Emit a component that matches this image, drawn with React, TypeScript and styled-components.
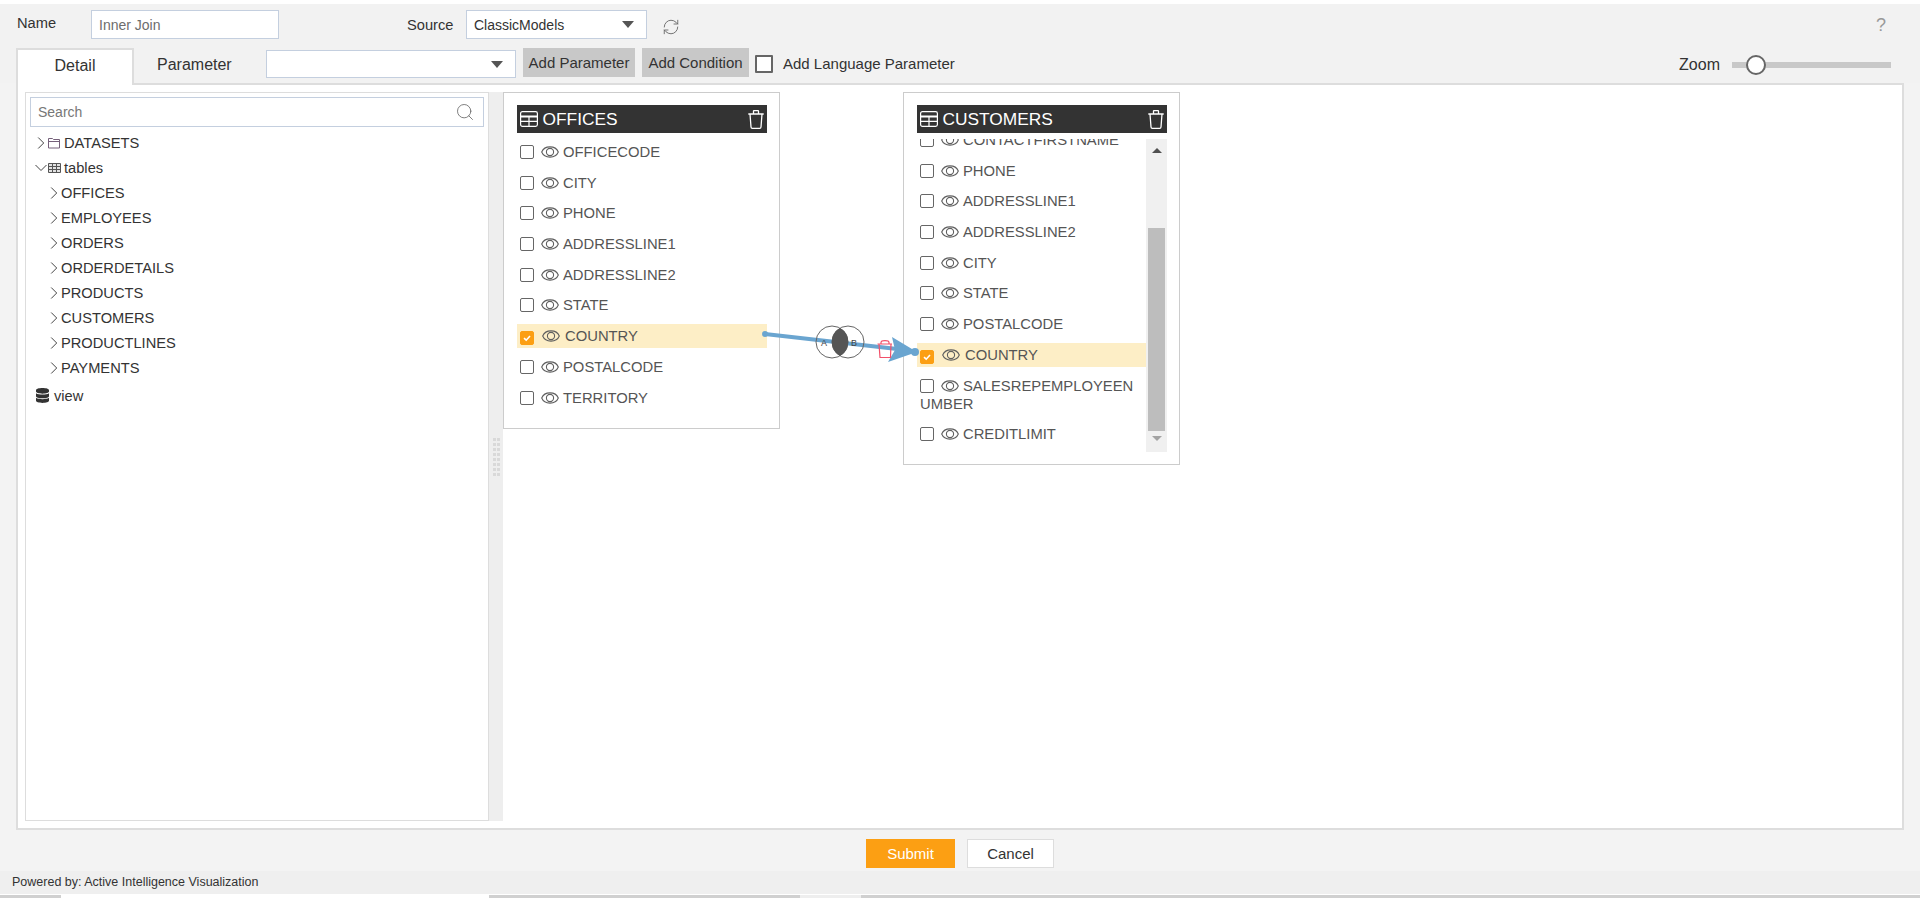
import React from 'react';
import styled, { createGlobalStyle } from 'styled-components';
import { FaDatabase } from 'react-icons/fa';
import { RefreshCw, Search } from 'lucide-react';

const Global = createGlobalStyle`
  html, body { margin: 0; padding: 0; background: #f2f2f2; }
  * { box-sizing: border-box; }
  body { font-family: "Liberation Sans", Arial, sans-serif; font-size: 14.67px; color: #333; }
`;

const Page = styled.div`
  width: 1920px;
  height: 898px;
  overflow: hidden;
  display: flex;
  flex-direction: column;
  background: #f3f3f3;
  border-top: 4px solid #fff;
`;

const HeaderRow = styled.div`
  height: 44px;
  flex: none;
  display: flex;
  align-items: flex-start;
  padding: 6px 33px 0 17px;
  background: #f2f2f2;
`;

const FieldLabel = styled.label<{ $width: number; $top?: number }>`
  width: ${p => p.$width}px;
  flex: none;
  margin-top: ${p => p.$top ?? 0}px;
  line-height: 26px;
  color: #333;
`;

const NameInput = styled.input`
  width: 188px;
  height: 29px;
  border: 1px solid #c4cfdf;
  padding: 2px 7px;
  font: 14px "Liberation Sans", Arial, sans-serif;
  color: #6d6d6d;
  background: #fff;
  outline: none;
  margin-right: 128px;
`;

const Select = styled.div<{ $width: number; $height: number }>`
  width: ${p => p.$width}px;
  height: ${p => p.$height}px;
  flex: none;
  display: flex;
  align-items: center;
  padding: 0 12px 0 7px;
  background: #fff;
  border: 1px solid #c4cfdf;
  color: #333;
  font-size: 14px;
  &::after {
    content: '';
    margin-left: auto;
    border-left: 6px solid transparent;
    border-right: 6px solid transparent;
    border-top: 7px solid #555;
  }
`;

const ReloadIcon = styled(RefreshCw)`
  width: 18px;
  height: 18px;
  margin: 8px 0 0 15px;
  color: #666;
`;

const HelpMark = styled.span`
  margin-left: auto;
  margin-right: 1px;
  margin-top: 5px;
  font-size: 18px;
  color: #999;
`;

const TabRow = styled.div`
  height: 35px;
  flex: none;
  display: flex;
  align-items: flex-start;
  padding: 0 0 0 16px;
  position: relative;
  z-index: 1;
  background: #f2f2f2;
`;

const ActiveTab = styled.div`
  width: 118px;
  height: 37px;
  flex: none;
  background: #fff;
  border: 2px solid #ddd;
  border-bottom: none;
  text-align: center;
  line-height: 32px;
  font-size: 16px;
  color: #333;
`;

const Tab = styled.div`
  width: 132px;
  flex: none;
  padding-left: 23px;
  line-height: 33px;
  font-size: 16px;
  color: #333;
`;

const RowSelectSlot = styled.div`
  margin: 2px 7px 0 0;
`;

const GrayButton = styled.button<{ $width: number }>`
  width: ${p => p.$width}px;
  height: 29px;
  flex: none;
  border: none;
  background: #c8c8c8;
  color: #333;
  font: 15px "Liberation Sans", Arial, sans-serif;
  padding: 0;
  margin-right: 7px;
`;

const LanguageBox = styled.span`
  width: 18px;
  height: 18px;
  flex: none;
  margin: 7px 10px 0 -1px;
  border: 2px solid #666;
  border-radius: 1px;
  background: #fff;
`;

const LanguageLabel = styled.span`
  line-height: 31px;
  font-size: 15px;
  color: #333;
`;

const ZoomGroup = styled.div`
  margin-left: auto;
  margin-right: 29px;
  display: flex;
  align-items: center;
  height: 34px;
`;

const ZoomLabel = styled.span`
  margin-right: 12px;
  font-size: 16px;
  color: #333;
`;

const SliderTrack = styled.div`
  width: 159px;
  height: 6px;
  background: #c8c8c8;
  position: relative;
`;

const SliderThumb = styled.span`
  position: absolute;
  left: 14px;
  top: -7px;
  width: 20px;
  height: 20px;
  border-radius: 50%;
  background: #fff;
  border: 2px solid #666;
`;

const MainPanel = styled.div`
  height: 747px;
  flex: none;
  margin: 0 16px;
  background: #fff;
  border: 2px solid #ddd;
  display: flex;
  padding: 7px 0 7px 7px;
`;

const Sidebar = styled.div`
  width: 464px;
  flex: none;
  border: 1px solid #ddd;
  padding: 4px;
`;

const SearchBox = styled.div`
  height: 30px;
  border: 1px solid #c4cfdf;
  display: flex;
  align-items: center;
  justify-content: space-between;
  padding: 0 8px 0 7px;
  color: #777;
  font-size: 14px;
  margin-bottom: 3px;
`;

const SearchIcon = styled(Search)`
  width: 20px;
  height: 20px;
  color: #666;
`;

const TreeRow = styled.div<{ $indent: number }>`
  height: 25px;
  display: flex;
  align-items: center;
  padding-left: ${p => p.$indent}px;
  color: #333;
  white-space: nowrap;
`;

const TreeIconSlot = styled.span<{ $gap: number }>`
  display: inline-flex;
  align-items: center;
  margin-right: ${p => p.$gap}px;
`;

const ViewRow = styled(TreeRow)`
  margin-top: 3px;
`;

const ViewIcon = styled(FaDatabase)`
  width: 13px;
  height: 15px;
  color: #333;
  margin-right: 5px;
`;

const Splitter = styled.div`
  width: 14px;
  flex: none;
  background: #eee;
  display: flex;
  align-items: center;
  justify-content: center;
`;

const Grip = styled.span`
  width: 7px;
  height: 38px;
  background-image:
    linear-gradient(90deg, transparent 3px, #eee 3px, #eee 4px, transparent 4px),
    repeating-linear-gradient(to bottom, #d9d9d9 0, #d9d9d9 3px, transparent 3px, transparent 5px);
`;

const Canvas = styled.div`
  flex: 1;
  position: relative;
`;

const TableNode = styled.div<{ $left: number; $height: number }>`
  position: absolute;
  left: ${p => p.$left}px;
  top: 0;
  width: 277px;
  height: ${p => p.$height}px;
  background: #fff;
  border: 1px solid #ccc;
  padding: 12px 12px 12px 13px;
`;

const NodeHeader = styled.div`
  height: 28px;
  background: #333;
  color: #fff;
  display: flex;
  align-items: center;
  padding: 0 3px 0 3px;
  font-size: 17.33px;
  gap: 4.5px;
`;

const NodeDelete = styled.span`
  margin-left: auto;
  display: inline-flex;
`;

const FieldList = styled.div`
  padding-top: 7px;
`;

const ScrollArea = styled.div`
  height: 313px;
  margin-top: 6px;
  display: flex;
  overflow: hidden;
`;

const ScrollContent = styled.div`
  flex: 1;
  min-width: 0;
  overflow: hidden;
`;

const ScrollShift = styled.div`
  margin-top: -11px;
`;

const ScrollTrack = styled.div`
  width: 21px;
  flex: none;
  background: #f0f0f0;
  display: flex;
  flex-direction: column;
  align-items: center;
  padding-top: 9px;
`;

const ArrowUp = styled.span`
  border-left: 5px solid transparent;
  border-right: 5px solid transparent;
  border-bottom: 5px solid #505050;
`;

const ArrowDown = styled.span`
  margin-top: 5px;
  border-left: 5px solid transparent;
  border-right: 5px solid transparent;
  border-top: 5px solid #a3a3a3;
`;

const ScrollThumb = styled.div`
  width: 17px;
  height: 203px;
  margin-top: 75px;
  background: #bdbdbd;
`;

const FieldRow = styled.div<{ $on?: boolean }>`
  padding: 3px 3px;
  margin-bottom: 6.7px;
  min-height: 24px;
  line-height: 18px;
  font-size: 14.8px;
  color: #555;
  word-break: break-all;
  background: ${p => (p.$on ? '#fdeec6' : 'transparent')};
`;

const Check = styled.span<{ $on?: boolean }>`
  display: inline-flex;
  align-items: center;
  justify-content: center;
  width: 14px;
  height: 14px;
  vertical-align: -2px;
  margin-right: 7px;
  border-radius: 2px;
  border: 1px solid ${p => (p.$on ? '#fc9f13' : '#666')};
  background: ${p => (p.$on ? '#fc9f13' : '#fff')};
`;

const EyeSlot = styled.span<{ $on?: boolean }>`
  display: inline-block;
  width: 18px;
  height: 12px;
  margin-left: ${p => (p.$on ? 1 : 0)}px;
  margin-right: ${p => (p.$on ? 5 : 4)}px;
  vertical-align: -1px;
`;

const Connector = styled.svg`
  position: absolute;
  left: 0;
  top: 0;
  pointer-events: none;
`;

const ActionBar = styled.div`
  height: 41px;
  flex: none;
  display: flex;
  justify-content: center;
  align-items: flex-start;
  gap: 12px;
  padding: 9px 0 0 0;
`;

const SubmitButton = styled.button`
  width: 89px;
  height: 29px;
  border: none;
  background: #fc9f13;
  color: #fff;
  font: 15px "Liberation Sans", Arial, sans-serif;
`;

const CancelButton = styled.button`
  width: 87px;
  height: 29px;
  border: 1px solid #ddd;
  background: #fff;
  color: #333;
  font: 15px "Liberation Sans", Arial, sans-serif;
`;

const Footer = styled.div`
  height: 23px;
  flex: none;
  background: #efefef;
  padding-left: 12px;
  line-height: 23px;
  font-size: 12.5px;
  color: #333;
`;

const BottomStrip = styled.div`
  height: 4px;
  flex: none;
  background: #d0d0d0;
  border-top: 1px solid #fff;
  display: flex;
`;

const StripTab = styled.span<{ $left: number; $width: number; $color: string }>`
  margin-left: ${p => p.$left}px;
  width: ${p => p.$width}px;
  background: ${p => p.$color};
`;

const Chevron = ({ open }: { open?: boolean }) => (
  <svg width="12" height="12" viewBox="0 0 12 12" fill="none" stroke="#444" strokeWidth="1">
    <path d={open ? 'M0.5 3 L6 8.5 L11.5 3' : 'M3.2 0.5 L8.7 6 L3.2 11.5'} />
  </svg>
);

const FolderIcon = () => (
  <svg width="12" height="12" viewBox="0 0 12 12" fill="none" stroke="#75607a" strokeWidth="1">
    <path d="M0.5 11 V1.5 H4.5 L5.5 2.5 H11.5 V11 Z M0.5 4.5 H11.5" />
  </svg>
);

const GridIcon = () => (
  <svg width="13" height="10" viewBox="0 0 13 10" fill="#e2e2e2" stroke="#555" strokeWidth="1">
    <path d="M0.5 0.5 H12.5 V9.5 H0.5 Z M0.5 3.5 H12.5 M0.5 6.5 H12.5 M4.5 0.5 V9.5 M8.5 0.5 V9.5" />
  </svg>
);

const TableIcon = () => (
  <svg width="18" height="16" viewBox="0 0 18 16" fill="none" stroke="#fff" strokeWidth="1.2">
    <rect x="0.6" y="0.6" width="16.8" height="14.8" rx="1.8" />
    <path d="M0.6 5 H17.4 M0.6 5.9 H17.4 M0.6 10.4 H17.4 M9 5.5 V15.4" />
  </svg>
);

const TrashIcon = () => (
  <svg width="16" height="19" viewBox="0 0 16 19" fill="none" stroke="#fff" strokeWidth="1.3">
    <path d="M0.3 4 H15.7 M5.5 4 V1.2 Q5.5 0.7 6 0.7 H10 Q10.5 0.7 10.5 1.2 V4 M2 4 L3 17 Q3.1 18.3 4.3 18.3 H11.7 Q12.9 18.3 13 17 L14 4" />
  </svg>
);

const EyeIcon = () => (
  <svg width="18" height="12" viewBox="0 0 18 12" fill="none" stroke="#5f5f5f" strokeWidth="1.1">
    <path d="M0.7 6 C3.5 -0.8 14.5 -0.8 17.3 6 C14.5 12.8 3.5 12.8 0.7 6 Z" />
    <circle cx="9" cy="6" r="3.6" />
  </svg>
);

const Tick = () => (
  <svg width="10" height="10" viewBox="0 0 10 10" fill="none" stroke="#fff" strokeWidth="1.6">
    <path d="M2 5.2 L4.2 7.2 L8 3" />
  </svg>
);

const Field = ({ name, on }: { name: string; on?: boolean }) => (
  <FieldRow $on={on}>
    <Check $on={on}>{on && <Tick />}</Check>
    <EyeSlot $on={on}>
      <EyeIcon />
    </EyeSlot>
    {name}
  </FieldRow>
);

const officeFields = ['OFFICECODE', 'CITY', 'PHONE', 'ADDRESSLINE1', 'ADDRESSLINE2', 'STATE', 'COUNTRY', 'POSTALCODE', 'TERRITORY'];
const customerFields = ['CONTACTFIRSTNAME', 'PHONE', 'ADDRESSLINE1', 'ADDRESSLINE2', 'CITY', 'STATE', 'POSTALCODE', 'COUNTRY', 'SALESREPEMPLOYEENUMBER', 'CREDITLIMIT'];
const tables = ['OFFICES', 'EMPLOYEES', 'ORDERS', 'ORDERDETAILS', 'PRODUCTS', 'CUSTOMERS', 'PRODUCTLINES', 'PAYMENTS'];

export default function App() {
  return (
    <Page>
      <Global />
      <HeaderRow>
        <FieldLabel $width={74}>Name</FieldLabel>
        <NameInput defaultValue="Inner Join" />
        <FieldLabel $width={59} $top={2}>Source</FieldLabel>
        <Select $width={181} $height={29}>ClassicModels</Select>
        <ReloadIcon strokeWidth={1.2} />
        <HelpMark>?</HelpMark>
      </HeaderRow>
      <TabRow>
        <ActiveTab>Detail</ActiveTab>
        <Tab>Parameter</Tab>
        <RowSelectSlot>
          <Select $width={250} $height={28} />
        </RowSelectSlot>
        <GrayButton $width={112}>Add Parameter</GrayButton>
        <GrayButton $width={107}>Add Condition</GrayButton>
        <LanguageBox />
        <LanguageLabel>Add Language Parameter</LanguageLabel>
        <ZoomGroup>
          <ZoomLabel>Zoom</ZoomLabel>
          <SliderTrack>
            <SliderThumb />
          </SliderTrack>
        </ZoomGroup>
      </TabRow>
      <MainPanel>
        <Sidebar>
          <SearchBox>
            Search
            <SearchIcon strokeWidth={1} />
          </SearchBox>
          <TreeRow $indent={5}>
            <TreeIconSlot $gap={1}><Chevron /></TreeIconSlot>
            <TreeIconSlot $gap={4}><FolderIcon /></TreeIconSlot>
            DATASETS
          </TreeRow>
          <TreeRow $indent={5}>
            <TreeIconSlot $gap={1}><Chevron open /></TreeIconSlot>
            <TreeIconSlot $gap={3}><GridIcon /></TreeIconSlot>
            tables
          </TreeRow>
          {tables.map(t => (
            <TreeRow key={t} $indent={18}>
              <TreeIconSlot $gap={1}><Chevron /></TreeIconSlot>
              {t}
            </TreeRow>
          ))}
          <ViewRow $indent={6}>
            <ViewIcon />
            view
          </ViewRow>
        </Sidebar>
        <Splitter>
          <Grip />
        </Splitter>
        <Canvas>
          <TableNode $left={0} $height={337}>
            <NodeHeader>
              <TableIcon />
              OFFICES
              <NodeDelete><TrashIcon /></NodeDelete>
            </NodeHeader>
            <FieldList>
              {officeFields.map(f => (
                <Field key={f} name={f} on={f === 'COUNTRY'} />
              ))}
            </FieldList>
          </TableNode>
          <TableNode $left={400} $height={373}>
            <NodeHeader>
              <TableIcon />
              CUSTOMERS
              <NodeDelete><TrashIcon /></NodeDelete>
            </NodeHeader>
            <ScrollArea>
              <ScrollContent>
                <ScrollShift>
                  {customerFields.map(f => (
                    <Field key={f} name={f} on={f === 'COUNTRY'} />
                  ))}
                </ScrollShift>
              </ScrollContent>
              <ScrollTrack>
                <ArrowUp />
                <ScrollThumb />
                <ArrowDown />
              </ScrollTrack>
            </ScrollArea>
          </TableNode>
          {/* join line, canvas origin is at 503,92 in the page */}
          <Connector width="460" height="300" viewBox="503 92 460 300">
            <circle cx="765" cy="334" r="3" fill="#6aa5d0" />
            <path d="M765 334 L906 350" stroke="#6aa5d0" strokeWidth="4" fill="none" />
            <path d="M892 337 L917 352 L888 362 L895 350 Z" fill="#6aa5d0" />
            <circle cx="915" cy="352" r="4" fill="#6aa5d0" />
            <circle cx="832" cy="342" r="16" fill="none" stroke="#666" strokeWidth="1" />
            <circle cx="848" cy="342" r="16" fill="none" stroke="#666" strokeWidth="1" />
            <path d="M840 328 A16 16 0 0 1 840 356 A16 16 0 0 1 840 328 Z" fill="#555" />
            <text x="821" y="346" fontSize="9" fill="#444" fontFamily="Liberation Sans">A</text>
            <text x="851" y="346" fontSize="9" fill="#444" fontFamily="Liberation Sans">B</text>
            <path d="M877.5 344 H892 M881 344 V342.5 C881 340 889 340 889 342.5 V344 M879 344 L880 357.5 H890.5 L891 344" fill="none" stroke="#f2506a" strokeWidth="1.2" />
          </Connector>
        </Canvas>
      </MainPanel>
      <ActionBar>
        <SubmitButton>Submit</SubmitButton>
        <CancelButton>Cancel</CancelButton>
      </ActionBar>
      <Footer>Powered by: Active Intelligence Visualization</Footer>
      <BottomStrip>
        <StripTab $left={61} $width={428} $color="#fff" />
        <StripTab $left={311} $width={61} $color="#eee" />
      </BottomStrip>
    </Page>
  );
}
